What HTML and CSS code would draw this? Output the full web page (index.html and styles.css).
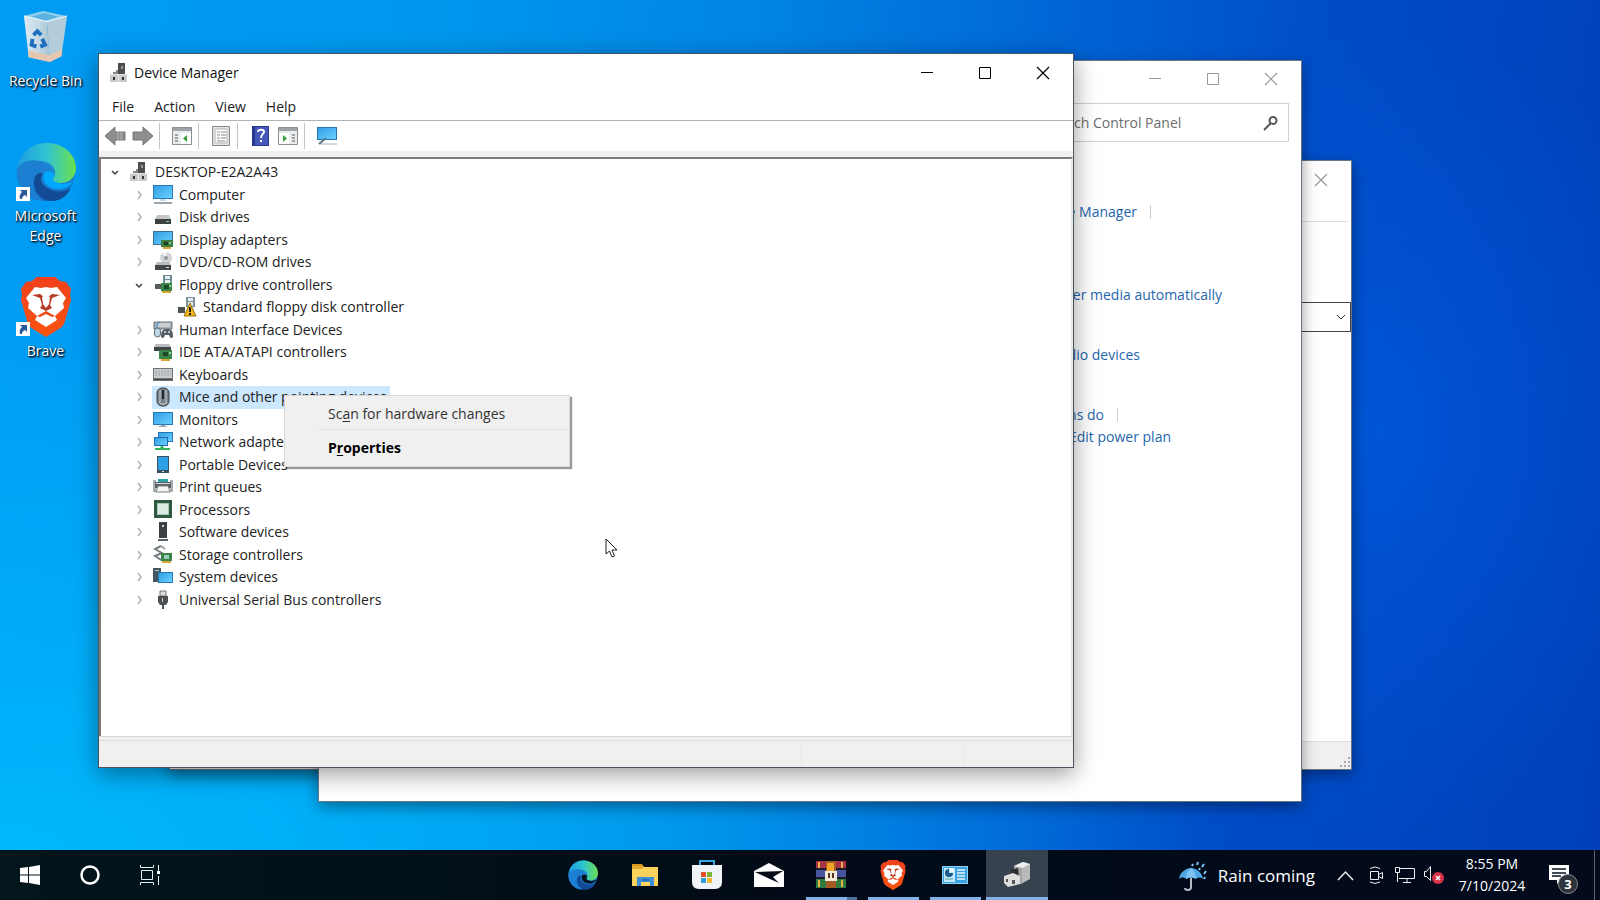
FILE: index.html
```html
<!DOCTYPE html>
<html lang="en">
<head>
<meta charset="utf-8">
<title>Device Manager</title>
<link rel="stylesheet" href="styles.css">
</head>
<body>
<svg class="defs" aria-hidden="true">
  <defs>
    <linearGradient id="scr" x1="0" y1="0" x2="1" y2="1"><stop offset="0" stop-color="#2f9fe6"/><stop offset="1" stop-color="#6fd0ff"/></linearGradient>
    <linearGradient id="edgeA" x1="0" y1="0" x2="1" y2="0"><stop offset="0" stop-color="#1b9de0"/><stop offset=".5" stop-color="#30c4d0"/><stop offset="1" stop-color="#6be04e"/></linearGradient>
    <linearGradient id="edgeB" x1="0" y1="0" x2="0" y2="1"><stop offset="0" stop-color="#2a9fe8"/><stop offset="1" stop-color="#1368c4"/></linearGradient>
    <linearGradient id="brv" x1="0" y1="0" x2="0" y2="1"><stop offset="0" stop-color="#f0401c"/><stop offset="1" stop-color="#fb5410"/></linearGradient>
    <linearGradient id="binG" x1="0" y1="0" x2="1" y2="0"><stop offset="0" stop-color="#dceaf3"/><stop offset=".6" stop-color="#c3d8e4"/><stop offset="1" stop-color="#a9c3d1"/></linearGradient>
    <symbol id="i-dm" viewBox="0 0 20 20"><path d="M9 0h7v11H9z" fill="#4d4d4d"/><path d="M12 3h2v3h-2z" fill="#999"/><path d="M7 7h2v4H7zM4 9h5v2H4z" fill="#888"/><path d="M1 11h17v8H1z" fill="#c9c9c9"/><path d="M1 11h17v1H1z" fill="#e6e6e6"/><path d="M4 14h2v3H4zM13 14h2v3h-2z" fill="#333"/><path d="M9 12h1v7H9z" fill="#eee"/></symbol>
    <symbol id="i-computer" viewBox="0 0 20 20"><path d="M0 0h20v14H0z" fill="#2478b8"/><path d="M1 1h18v12H1z" fill="url(#scr)"/><path d="M7 14h6v2H7z" fill="#c8dce8"/><path d="M1 17h18v2H1z" fill="#9aa7b0"/></symbol>
    <symbol id="i-disk" viewBox="0 0 20 20"><path d="M4 8h12l2 4H2z" fill="#c4c6c8"/><path d="M2 12h16v5H2z" fill="#3c4144"/><path d="M13 14h3v1h-3z" fill="#7fd68a"/></symbol>
    <symbol id="i-display" viewBox="0 0 20 20"><path d="M0 1h20v14H0z" fill="#3b6f94"/><path d="M1 2h18v12H1z" fill="url(#scr)"/><path d="M8 10h12v7H8z" fill="#3b7d45"/><path d="M11 12h4v3h-4z" fill="#1d3c22"/><path d="M16 12h2v2h-2z" fill="#8bc48f"/><path d="M10 17h8v2h-8z" fill="#d9a82e"/></symbol>
    <symbol id="i-dvd" viewBox="0 0 20 20"><circle cx="13" cy="6" r="6" fill="#d2d5d7"/><path d="M13 6 9 1a6 6 0 0 1 5-1z" fill="#f5f5f5"/><circle cx="13" cy="6" r="2" fill="#8f9599"/><path d="M4 10h12l2 3H2z" fill="#b9bcbe"/><path d="M2 13h16v5H2z" fill="#44484b"/><path d="M13 15h3v1h-3z" fill="#ddd"/></symbol>
    <symbol id="i-floppy" viewBox="0 0 20 20"><path d="M10 0h9v8h-9z" fill="#6c8f92"/><path d="M12 1h5v3h-5zM12 5h5v3h-5z" fill="#e4eef0"/><path d="M2 9h7v5H2z" fill="#555c5e"/><path d="M8 8h11v8H8z" fill="#3b8549"/><path d="M11 10h5v4h-5z" fill="#1f4a2a"/><path d="M16 10h2v2h-2z" fill="#9bd0a2"/><path d="M9 16h9v2H9z" fill="#d9a82e"/></symbol>
    <symbol id="i-floppywarn" viewBox="0 0 20 20"><path d="M9 0h9v10H9z" fill="#7d9196"/><path d="M11 1h5v3h-5zM11 5h5v4h-5z" fill="#e4eef0"/><path d="M1 10h7v6H1z" fill="#4b5153"/><path d="m13 6 6 13H7z" fill="#f4b61d" stroke="#9a7310" stroke-width="1"/><path d="M12 10h2v5h-2zM12 16h2v2h-2z" fill="#222"/></symbol>
    <symbol id="i-hid" viewBox="0 0 20 20"><path d="M1 2h18v7H1z" fill="#a9b0b5" stroke="#6c7479"/><path d="M3 4h14M3 6h14" stroke="#e8ecee"/><rect x="1.500" y="8" width="6" height="9" rx="3" fill="#bfd8e8" stroke="#5f6c75"/><path d="M4 8V4l3-2" stroke="#2d80c8" fill="none"/><path d="M8 17c0-7 2-8 6-8s6 1 6 8c-2 2-3 1-4-2h-4c-1 3-2 4-4 2z" fill="#555f66"/><circle cx="12" cy="12" r="1" fill="#ddd"/><circle cx="16" cy="12" r="1" fill="#ddd"/></symbol>
    <symbol id="i-ide" viewBox="0 0 20 20"><path d="M3 2h13l2 3H1z" fill="#b8bcbe"/><path d="M1 5h17v4H1z" fill="#3f4446"/><path d="M6 8h13v9H6z" fill="#3b8549"/><path d="M10 10h5v4h-5z" fill="#1f4a2a"/><path d="M16 10h2v2h-2z" fill="#9bd0a2"/><path d="M8 17h9v2H8z" fill="#d9a82e"/></symbol>
    <symbol id="i-kbd" viewBox="0 0 20 20"><path d="M0 3h20v13H0z" fill="#6e7376"/><path d="M1 4h18v9H1z" fill="#c9cdd0"/><path d="M2 6h16M2 8h16M2 10h16" stroke="#9ba1a5" stroke-dasharray="2 1"/><path d="M1 14h18v1H1z" fill="#44484b"/></symbol>
    <symbol id="i-mouse" viewBox="0 0 20 20"><rect x="4" y="1" width="12" height="18" rx="5" fill="#7a8289" stroke="#3a3f42"/><path d="M7 3v12M13 3v12" stroke="#c3cdd3"/><path d="M9 3h2v9H9z" fill="#20262a"/><path d="M6 15c2 3 6 3 8 0" stroke="#d5dde2" fill="none"/></symbol>
    <symbol id="i-monitor" viewBox="0 0 20 20"><path d="M0 2h20v13H0z" fill="#2478b8"/><path d="M1 3h18v11H1z" fill="url(#scr)"/><path d="M8 15h4v1H8zM6 16h8v1H6z" fill="#9aa7b0"/></symbol>
    <symbol id="i-net" viewBox="0 0 20 20"><path d="M5 0h15v10H5z" fill="#2478b8"/><path d="M6 1h13v8H6z" fill="url(#scr)"/><path d="M1 5h14v9H1z" fill="#1d6cab"/><path d="M2 6h12v7H2z" fill="url(#scr)"/><path d="M2 16h5l1-2h2l1 2h6v2H2z" fill="#35b558"/></symbol>
    <symbol id="i-portable" viewBox="0 0 20 20"><path d="M4 1h12v17H4z" fill="#3c4f5c"/><path d="M5 2h10v13H5z" fill="#2f9fe6"/><path d="M9 16h2v1H9z" fill="#dde"/></symbol>
    <symbol id="i-print" viewBox="0 0 20 20"><path d="M0 3h3v12H0zM17 3h3v12h-3z" fill="#a9b0b4"/><path d="M5 2h10v4H5z" fill="#2fa3a8"/><path d="M2 5h16v6H2z" fill="#5a6064"/><path d="M3 6h14v1H3z" fill="#d9dee0"/><path d="M5 9h10l2 6H3z" fill="#f3f5f6" stroke="#7a8084"/></symbol>
    <symbol id="i-cpu" viewBox="0 0 20 20"><path d="M1 0h18v18H1z" fill="#2f5a41"/><path d="M4 3h12v12H4z" fill="#a9c8b3"/><path d="M5 4h10v10H5z" fill="#dcebe0"/></symbol>
    <symbol id="i-soft" viewBox="0 0 20 20"><path d="M6 0h8v16H6z" fill="#3a4043"/><path d="M9 3h2v2H9z" fill="#c9d6ce"/><path d="M5 17h10v2H5z" fill="#5d6467"/></symbol>
    <symbol id="i-storage" viewBox="0 0 20 20"><path d="M8 1 2 4l7 4-7 3 6 4" stroke="#747b7f" stroke-width="2" fill="none"/><path d="m8 1 4 3" stroke="#9ba2a6" stroke-width="2"/><path d="M8 8h11v8H8z" fill="#3b8549"/><path d="M11 10h5v4h-5z" fill="#9bd0b8"/><path d="M9 16h9v2H9z" fill="#d9a82e"/></symbol>
    <symbol id="i-system" viewBox="0 0 20 20"><path d="M0 1h8v14H0z" fill="#44565e"/><path d="M2 3h4v1H2z" fill="#b5c6cc"/><path d="M5 5h15v11H5z" fill="#2478b8"/><path d="M6 6h13v9H6z" fill="url(#scr)"/></symbol>
    <symbol id="i-usb" viewBox="0 0 20 20"><path d="M7 1h6v5H7z" fill="#ddd" stroke="#777"/><path d="M5 6h10v6l-2 3H7l-2-3z" fill="#4c5053"/><path d="M9 8h1v4H9z" fill="#ccc"/><path d="M9 15h2v4H9z" fill="#4c5053"/></symbol>
    <symbol id="i-right" viewBox="0 0 20 20"><path d="m9 6 3 4-3 4" fill="none" stroke="#b4b4b4" stroke-width="1.500"/></symbol>
    <symbol id="i-down" viewBox="0 0 20 20"><path d="m7 9 3 3 3-3" fill="none" stroke="#404040" stroke-width="1.500"/></symbol>
    <symbol id="i-x" viewBox="0 0 14 14"><path d="m1 1 12 12M13 1 1 13" fill="none" stroke="currentColor" stroke-width="1.200"/></symbol>
    <symbol id="i-max" viewBox="0 0 14 14"><path d="M1.500 1.500h11v11h-11z" fill="none" stroke="currentColor"/></symbol>
    <symbol id="i-min" viewBox="0 0 14 14"><path d="M1 6.500h12" stroke="currentColor"/></symbol>
    <symbol id="i-edge" viewBox="0 0 60 60">
      <circle cx="30" cy="30" r="29" fill="url(#edgeB)"/>
      <path d="M1 28C3 11 16 1 31 1c17 0 29 12 29 25 0 9-7 15-15 15-6 0-9-2-8-4 5-6 1-17-11-18C15 18 4 22 1 28z" fill="url(#edgeA)"/>
      <path d="M1 27c5-9 18-11 27-6 7 3 9 8 7 11-9-5-18 1-18 9 0 8 5 15 12 18C13 60-1 45 1 27z" fill="#1c7fd2"/>
      <path d="M20 33c-6 11 2 24 14 26 10 1 17-5 21-13-9 6-23 4-29-5-2-3-1-6 1-9-3-2-5-1-7 1z" fill="#124a96"/>
      <path d="M28 31c-3 8 4 17 16 16 6 0 11-4 13-8-5 3-12 4-17 1-3-1-4-2-2-5 2-5-7-8-10-4z" fill="currentColor"/>
    </symbol>
    <symbol id="i-brave" viewBox="0 0 52 60">
      <path d="M12 4 17 0h18l5 4 6 1 5 7-1 5 1 6-6 21c-1 4-3 6-6 8L26 60 13 52c-3-2-5-4-6-8L1 23l1-6-1-5 5-7z" fill="url(#brv)"/>
      <path d="m15 10 6 1 5-1 5 1 6-1 9 11-3 5 1 5-9 8 2 4-11 7-11-7 2-4-9-8 1-5-3-5z" fill="#fff"/>
      <path d="m12 18 8-1 4 3-1 7 3 4 3-4-1-7 4-3 8 1-8 3-2 7 2 3-6 3-6-3 2-3-2-7z" fill="#b83a24"/>
      <path d="m22 20 4-2 4 2-1 7-3 3-3-3z" fill="#fff"/>
      <path d="m17 39 9-5 9 5-3 1-6-3-6 3z" fill="#ee4a1c"/>
    </symbol>
    <symbol id="i-link" viewBox="0 0 14 14"><path d="M0 0h14v14H0z" fill="#fff"/><path d="M4 3h7v7L9 8c-2 1-3 2-3 4H4c-1-3 0-5 2-7z" fill="#2a5a9c"/></symbol>
  </defs>
</svg>

<main class="desktop">
  <nav class="shortcuts" aria-label="Desktop">
    <a class="shortcut" href="#bin">
      <span class="pic"><svg width="48" height="54" viewBox="0 0 50 56"><path d="M2 6 22 1l24 5-2 7H4z" fill="#8fcdea"/><path d="m10 7 13-4 15 4-14 4z" fill="#5cb2de"/><path d="M2 6l24 6 3 42-22-5z" fill="url(#binG)"/><path d="m26 12 21-6-6 42-12 6z" fill="#b2ccda"/><path d="m6 42 22 5 14-6-1 7-12 6-22-5z" fill="#e6c6ae"/><path d="m2 6 24 6 21-6" stroke="#f3fafd" fill="none"/><g fill="none" stroke="#1f6fc0" stroke-width="4"><path d="m12 26 4-4 4 4"/><path d="m21 30 3 6-5 2"/><path d="m15 38-5-2 1-6"/></g></svg></span>
      <span>Recycle Bin</span>
    </a>
    <a class="shortcut" href="#edge">
      <span class="pic cut-edge"><svg width="60" height="60"><use href="#i-edge"/></svg><svg class="mark" width="14" height="14"><use href="#i-link"/></svg></span>
      <span>Microsoft Edge</span>
    </a>
    <a class="shortcut" href="#brave">
      <span class="pic"><svg width="52" height="60"><use href="#i-brave"/></svg><svg class="mark" width="14" height="14"><use href="#i-link"/></svg></span>
      <span>Brave</span>
    </a>
  </nav>

  <section class="window win-back" aria-label="Properties">
    <div class="titlebar"><div class="controls"><button aria-label="Close"><svg width="14" height="14"><use href="#i-x"/></svg></button></div></div>
    <hr>
    <div class="combo"><select aria-label="Location"><option></option></select><svg width="10" height="6" viewBox="0 0 10 6"><path d="m1 1 4 4 4-4" fill="none" stroke="#333"/></svg></div>
    <div class="grow"></div>
    <footer class="grip-bar"><svg width="12" height="12" viewBox="0 0 12 12"><path d="M9 0h2v2H9zM9 4h2v2H9zM5 4h2v2H5zM9 8h2v2H9zM5 8h2v2H5zM1 8h2v2H1z" fill="#aaa"/></svg></footer>
  </section>

  <section class="window win-mid" aria-label="Control Panel">
    <div class="titlebar short"><div class="controls">
      <button aria-label="Minimize"><svg width="14" height="14"><use href="#i-min"/></svg></button>
      <button aria-label="Maximize"><svg width="14" height="14"><use href="#i-max"/></svg></button>
      <button aria-label="Close"><svg width="14" height="14"><use href="#i-x"/></svg></button></div></div>
    <div class="search"><input type="text" aria-label="Search Control Panel" placeholder="Search Control Panel"><svg width="16" height="16" viewBox="0 0 16 16"><circle cx="10" cy="5.500" r="3.500" fill="none" stroke="#555" stroke-width="2"/><path d="M7.500 8.500 1 15" stroke="#555" stroke-width="2"/></svg></div>
    <div class="tasks">
      <p class="t-dev"><a href="#dm">Device Manager</a><i></i></p>
      <p class="t-media"><a href="#media">Play CDs or other media automatically</a></p>
      <p class="t-audio"><a href="#audio">Manage audio devices</a></p>
      <p class="t-power"><a href="#power">Change what the power buttons do</a><i></i></p>
      <p class="t-plan"><a href="#plan">Edit power plan</a></p>
    </div>
  </section>

  <section class="window win-front" aria-label="Device Manager">
    <header class="titlebar">
      <svg width="20" height="20"><use href="#i-dm"/></svg>
      <h1>Device Manager</h1>
      <div class="controls">
        <button aria-label="Minimize"><svg width="14" height="14"><use href="#i-min"/></svg></button>
        <button aria-label="Maximize"><svg width="14" height="14"><use href="#i-max"/></svg></button>
        <button aria-label="Close"><svg width="14" height="14"><use href="#i-x"/></svg></button>
      </div>
    </header>
    <nav class="menubar"><button>File</button><button>Action</button><button>View</button><button>Help</button></nav>
    <div class="toolbar">
      <button aria-label="Back"><svg width="22" height="20" viewBox="0 0 22 20"><path d="M1 10 11 1v5h10v8H11v5z" fill="#8e8e8e" stroke="#777"/><path d="M14 6v8M17 6v8" stroke="#b5b5b5"/></svg></button>
      <button aria-label="Forward"><svg width="22" height="20" viewBox="0 0 22 20"><path d="M21 10 11 1v5H1v8h10v5z" fill="#8e8e8e" stroke="#777"/></svg></button>
      <span class="sep"></span>
      <button aria-label="Show console tree"><svg width="20" height="18" viewBox="0 0 20 18"><path d="M.5.500h19v17H.5z" fill="#e9ebec" stroke="#8a8f92"/><path d="M1 1h18v3H1z" fill="#9da3a6"/><path d="M9 6h10v11H9z" fill="#fff"/><path d="M3 8h3M3 11h3M3 14h3" stroke="#555"/><path d="M15 8v7l-4-3.500z" fill="#35a035"/></svg></button>
      <span class="sep"></span>
      <button aria-label="Properties"><svg width="18" height="20" viewBox="0 0 18 20"><path d="M.5.500h17v19H.5z" fill="#e4e4e4" stroke="#85898b"/><path d="M3 3h12v14H3z" fill="#fff" stroke="#b5b5b5"/><path d="M5 6h3M9 6h5M5 9h3M9 9h5M5 12h3M9 12h5M5 15h8" stroke="#888"/></svg></button>
      <span class="sep"></span>
      <button aria-label="Help"><svg width="17" height="20" viewBox="0 0 17 20"><path d="M0 0h17v20H0z" fill="#27368f"/><path d="M3 1h13v18H3z" fill="#4458b8"/><path d="M6 6c0-3 6-3 6 0 0 2-3 2-3 6" fill="none" stroke="#fff" stroke-width="2"/><path d="M8 14h2v2H8z" fill="#fff"/></svg></button>
      <button aria-label="Show action pane"><svg width="20" height="18" viewBox="0 0 20 18"><path d="M.5.500h19v17H.5z" fill="#e9ebec" stroke="#8a8f92"/><path d="M1 1h18v3H1z" fill="#9da3a6"/><path d="M1 6h10v11H1z" fill="#fff"/><path d="M14 8h3M14 11h3M14 14h3" stroke="#555"/><path d="M5 8v7l4-3.500z" fill="#35a035"/></svg></button>
      <span class="sep"></span>
      <button aria-label="Scan for hardware changes"><svg width="20" height="20" viewBox="0 0 20 20"><path d="M0 1h20v13H0z" fill="#2478b8"/><path d="M1 2h18v11H1z" fill="url(#scr)"/><path d="m2 18 7-6" stroke="#5c7a8a" stroke-width="2"/><path d="M4 18h16" stroke="#a5b2b9"/></svg></button>
    </div>
    <div class="pane">
      <ul class="tree">
        <li class="l0"><svg><use href="#i-down"/></svg><span><svg><use href="#i-dm"/></svg>DESKTOP-E2A2A43</span></li>
        <li><svg><use href="#i-right"/></svg><span><svg><use href="#i-computer"/></svg>Computer</span></li>
        <li><svg><use href="#i-right"/></svg><span><svg><use href="#i-disk"/></svg>Disk drives</span></li>
        <li><svg><use href="#i-right"/></svg><span><svg><use href="#i-display"/></svg>Display adapters</span></li>
        <li><svg><use href="#i-right"/></svg><span><svg><use href="#i-dvd"/></svg>DVD/CD-ROM drives</span></li>
        <li><svg><use href="#i-down"/></svg><span><svg><use href="#i-floppy"/></svg>Floppy drive controllers</span></li>
        <li class="l2"><svg></svg><span><svg><use href="#i-floppywarn"/></svg>Standard floppy disk controller</span></li>
        <li><svg><use href="#i-right"/></svg><span><svg><use href="#i-hid"/></svg>Human Interface Devices</span></li>
        <li><svg><use href="#i-right"/></svg><span><svg><use href="#i-ide"/></svg>IDE ATA/ATAPI controllers</span></li>
        <li><svg><use href="#i-right"/></svg><span><svg><use href="#i-kbd"/></svg>Keyboards</span></li>
        <li class="selected"><svg><use href="#i-right"/></svg><span><svg><use href="#i-mouse"/></svg>Mice and other pointing devices</span></li>
        <li><svg><use href="#i-right"/></svg><span><svg><use href="#i-monitor"/></svg>Monitors</span></li>
        <li><svg><use href="#i-right"/></svg><span><svg><use href="#i-net"/></svg>Network adapters</span></li>
        <li><svg><use href="#i-right"/></svg><span><svg><use href="#i-portable"/></svg>Portable Devices</span></li>
        <li><svg><use href="#i-right"/></svg><span><svg><use href="#i-print"/></svg>Print queues</span></li>
        <li><svg><use href="#i-right"/></svg><span><svg><use href="#i-cpu"/></svg>Processors</span></li>
        <li><svg><use href="#i-right"/></svg><span><svg><use href="#i-soft"/></svg>Software devices</span></li>
        <li><svg><use href="#i-right"/></svg><span><svg><use href="#i-storage"/></svg>Storage controllers</span></li>
        <li><svg><use href="#i-right"/></svg><span><svg><use href="#i-system"/></svg>System devices</span></li>
        <li><svg><use href="#i-right"/></svg><span><svg><use href="#i-usb"/></svg>Universal Serial Bus controllers</span></li>
      </ul>
    </div>
    <footer class="statusbar"><span></span><span></span><span></span></footer>
  </section>

  <div class="context" role="menu">
    <button role="menuitem">Sc<u>a</u>n for hardware changes</button>
    <hr>
    <button role="menuitem" class="strong">P<u>r</u>operties</button>
  </div>

  <svg class="cursor" width="13" height="20" viewBox="0 0 13 20"><path d="M1 1v15l3.500-3 2.500 6 2.500-1-2.500-6H12z" fill="#fff" stroke="#222"/></svg>
</main>

<footer class="taskbar">
  <div class="start">
    <button aria-label="Start"><svg width="20" height="20" viewBox="0 0 20 20"><path d="m0 3 8-1v7.500H0zM9 2l11-2v9.500H9zM0 10.500h8V18l-8-1zM9 10.500h11V20L9 18z" fill="#fff"/></svg></button>
    <button aria-label="Cortana"><svg width="20" height="20" viewBox="0 0 20 20"><circle cx="10" cy="10" r="8.500" fill="none" stroke="#fff" stroke-width="2.500"/></svg></button>
    <button aria-label="Task View"><svg width="22" height="20" viewBox="0 0 22 20"><path d="M2.500 5.500h11v9h-11zM1.500 0v2.500h13V0M1.500 20v-2.500h13V20M19.500 0v6M19.500 11v9" fill="none" stroke="#e6eeee"/><path d="M18 6h3v3h-3z" fill="#fff"/></svg></button>
  </div>
  <div class="apps">
    <button aria-label="Microsoft Edge"><svg width="30" height="30"><use href="#i-edge"/></svg></button>
    <button aria-label="File Explorer"><svg width="28" height="24" viewBox="0 0 28 24"><path d="M1 1h10l2 3H1z" fill="#d99a1c"/><path d="M1 4h26v19H1z" fill="#fbd35a"/><path d="M1 3h12l-2 3H1z" fill="#e8ac30"/><path d="M6 14h17v9h-4v-4h-9v4H6z" fill="#3f8fd8"/><path d="M11 16h7v2h-7z" fill="#2a6fb4"/></svg></button>
    <button aria-label="Microsoft Store"><svg width="30" height="30" viewBox="0 0 30 30"><path d="M8 6V1h14v5" fill="none" stroke="#34a6dc" stroke-width="2"/><path d="M0 5h30v17q0 7-7 7H7q-7 0-7-7z" fill="#f1f4f7"/><path d="M9 12h5v5H9z" fill="#e0502c"/><path d="M15 12h5v5h-5z" fill="#7db53a"/><path d="M9 18h5v5H9z" fill="#2f9ade"/><path d="M15 18h5v5h-5z" fill="#f4b932"/></svg></button>
    <button aria-label="Mail"><svg width="30" height="24" viewBox="0 0 30 24"><path d="M0 8 15 0l15 8v16H0z" fill="#fff"/><path d="m1 9 28-1-10 6 6 6-9-4z" fill="#020d17"/></svg></button>
    <button class="run stacked" aria-label="WinRAR"><svg width="30" height="28" viewBox="0 0 30 28"><path d="M0 0h30v9H0z" fill="#a83246"/><path d="M0 9h30v9H0z" fill="#48549e"/><path d="M0 18h30v9H0z" fill="#2e7d3e"/><path d="M3 1v7M26 1v7M3 19v7M26 19v7" stroke="#e8b048" stroke-width="2"/><path d="M0 8h30M0 17h30" stroke="#1b1b2b" stroke-width="2"/><path d="M10 0h10v27H10z" fill="#a55c24"/><path d="M11 2h7v8h-7z" fill="#f0a62c"/><path d="M9 10h12v10H9z" fill="#f3ecdc"/><path d="M12 12h2v5h-2zM16 12h2v5h-2z" fill="#5a3420"/></svg></button>
    <button class="run" aria-label="Brave"><svg width="26" height="30"><use href="#i-brave"/></svg></button>
    <button class="run" aria-label="Control Panel"><svg width="26" height="20" viewBox="0 0 26 20"><path d="M0 1h26v18H0z" fill="#8ed3f7"/><path d="M1 2h24v16H1z" fill="#3aa2e0"/><path d="M2 3h11v14H2z" fill="#bfe8fb"/><path d="M7 4a4 4 0 1 0 4 4H7z" fill="#1c5a8c"/><path d="M8 3a4 4 0 0 1 4 4H8z" fill="#f2f7fa"/><path d="M15 5h8M15 8h8M15 11h8M15 14h8" stroke="#e6f6fd" stroke-width="1.500"/><path d="M3 14h8" stroke="#5a9"/></svg></button>
    <button class="run active" aria-label="Device Manager"><svg width="28" height="26" viewBox="0 0 28 26"><path d="m11 4 9-4 7 2v15l-9 5-7-2z" fill="#b9babb"/><path d="m11 4 8 2v16l-8-2z" fill="#a3a4a5"/><path d="m11 4 9-4 7 2-8 4z" fill="#efefef"/><path d="m8 8 7-2 1 9-7 1z" fill="#2b2d2e"/><path d="m1 14 9-3 7 3v8L5 25l-4-4z" fill="#dedede"/><path d="M3 17h2v3H3zM9 18h3v4H9z" fill="#555"/></svg></button>
  </div>
  <div class="tray">
    <button class="weather"><svg width="30" height="30" viewBox="0 0 30 30"><path d="M1 18c1-7 7-11 12-11s11 4 12 11c-2-2-5-2-7 0-3-2-7-2-10 0-2-2-5-2-7 0z" fill="#4fa5e4"/><path d="M8 18c0-5 2-9 5-11 3 2 5 6 5 11-3-2-7-2-10 0z" fill="#7cc2f2"/><path d="M13 17v9q0 3-3 3t-3-2" fill="none" stroke="#b7bfc6" stroke-width="2"/><path d="m15 3-1 2M20 1l-1 3M26 3l-2 3M22 7l-1 2M28 10l-2 3M27 16l-1 2" stroke="#7fc4f4" stroke-width="2"/></svg><span>Rain coming</span></button>
    <button class="ic chev" aria-label="Show hidden icons"><svg width="17" height="11" viewBox="0 0 17 11"><path d="m1 10 7.500-8L16 10" fill="none" stroke="#eee" stroke-width="1.500"/></svg></button>
    <button class="ic" aria-label="Meet Now"><svg width="16" height="18" viewBox="0 0 16 18"><path d="M2.500 5.500h8v8h-8zM10.500 8.500l4-2v6l-4-2M2 2.500q5-3 10 0M2 16q5 3 10 0" fill="none" stroke="#eee"/></svg></button>
    <button class="ic" aria-label="Network"><svg width="20" height="18" viewBox="0 0 20 18"><path d="M4.500 2.500h15v10H4M12 13v3M8 16.500h8M.5 1.500h4v5h-4zM2.500 7v9" fill="none" stroke="#eee"/></svg></button>
    <button class="ic" aria-label="Volume muted"><svg width="22" height="20" viewBox="0 0 22 20"><path d="M1.500 6.500h2l4-5v14l-4-4h-2z" fill="none" stroke="#eee"/><circle cx="15" cy="13" r="6" fill="#d8324a"/><path d="m13 11 4 4M17 11l-4 4" stroke="#fff" stroke-width="1.500"/></svg></button>
    <button class="clock"><time>8:55 PM</time><time>7/10/2024</time></button>
    <button class="notes" aria-label="3 new notifications"><svg width="20" height="20" viewBox="0 0 20 20"><path d="M0 0h20v15h-8l-4 4v-4H0z" fill="#fff"/><path d="M3 4h14M3 8h14M3 11h9" stroke="#06121e" stroke-width="1.500"/></svg><b>3</b></button>
    <button class="peek" aria-label="Show desktop"></button>
  </div>
</footer>
</body>
</html>
```
FILE: styles.css
```css
* { box-sizing: border-box; }
html, body { height: 100%; margin: 0; }
body {
  display: flex;
  flex-direction: column;
  overflow: hidden;
  font: 14px/20px "Open Sans", "Noto Sans", sans-serif;
  color: #222;
  background:
    radial-gradient(ellipse 75% 60% at 0% 95%, rgba(0, 190, 255, .8), rgba(0, 190, 255, 0)),
    radial-gradient(ellipse 22% 45% at 86% 48%, rgba(0, 96, 232, .5), rgba(0, 96, 232, 0)),
    linear-gradient(97deg, #009cf4 0%, #0098ee 25%, #0084e2 45%, #0062d4 64%, #004cc8 78%, #003fb8 100%);
}
button, input, select { font: inherit; color: inherit; border: 0; padding: 0; margin: 0; background: none; }
a { color: inherit; text-decoration: none; }
p, ul, h1 { margin: 0; padding: 0; font-weight: 400; font-size: inherit; }
.defs { position: absolute; width: 0; height: 0; }

.desktop { flex: 1; position: relative; min-height: 0; }

/* desktop shortcuts */
.shortcuts { display: grid; grid-auto-rows: 135px; width: 91px; padding-top: 5px; }
.shortcut {
  display: flex; flex-direction: column; align-items: center; gap: 2px;
  color: #fff; text-align: center; line-height: 20px; padding: 0 4px;
  text-shadow: 1px 1px 2px #000, 1px 1px 2px #013;
}
.shortcut > span:last-child { margin: 0 -4px; }
.pic { position: relative; display: grid; place-items: center; width: 60px; height: 64px; }
.cut-edge svg { color: #00a8ff; }
.mark { position: absolute; left: 0; bottom: 3px; }

/* windows */
.window { position: absolute; display: flex; flex-direction: column; background: #fff; border: 1px solid rgba(40, 60, 80, .7); box-shadow: 0 5px 14px rgba(0, 0, 0, .4); }
.win-back { left: 169px; top: 160px; right: 248px; bottom: 80px; color: #999; }
.win-mid { left: 318px; top: 60px; right: 298px; bottom: 48px; color: #999; }
.win-front { left: 98px; top: 53px; right: 526px; bottom: 82px; color: #000; border-color: #4a5560; box-shadow: 0 6px 22px rgba(0, 0, 0, .4); }
.titlebar { display: flex; align-items: center; gap: 5px; height: 38px; padding-left: 10px; }
.titlebar h1 { color: #111; }
.titlebar.short { height: 36px; }
.controls { display: flex; margin-left: auto; align-self: stretch; padding-right: 1px; }
.controls button { width: 58px; display: grid; place-items: center; }

.menubar { display: flex; gap: 20px; padding: 2px 13px 0; height: 28px; align-items: center; }
.menubar button { color: #222; }
.toolbar { display: flex; align-items: stretch; height: 31px; padding: 0 2px; border-top: 1px solid #b4b4b4; }
.toolbar button { width: 28px; display: grid; place-items: center; }
.sep { width: 1px; margin: 2px 8px 2px 2px; background: #c4c4c4; }
.pane { flex: 1; min-height: 0; border-top: 6px solid #f0f0f0; display: flex; }
.tree {
  flex: 1; list-style: none; padding: 2px 0 125px;
  border: 2px solid #7c7c7c; border-right-color: #e8e8e8; border-bottom: 0;
  display: grid; grid-template-rows: repeat(20, minmax(0, 1fr));
}
.tree li { display: flex; align-items: stretch; padding-left: 28px; }
.tree li.l0 { padding-left: 4px; }
.tree li.l2 { padding-left: 52px; }
.tree svg { width: 20px; height: 20px; flex: none; align-self: center; }
.tree span { display: flex; align-items: center; gap: 6px; margin-left: 3px; padding: 0 3px 0 1px; color: #222; white-space: nowrap; }
.tree .selected span { background: #cce8ff; }
.statusbar { display: flex; height: 31px; background: #f0f0f0; border-top: 1px solid #d6d6d6; }
.statusbar span { flex: 10; border-right: 1px solid #e6e6e6; margin-top: 3px; border-top: 1px solid #dcdcdc; }
.statusbar span:first-child { flex: 65; }
.statusbar span:nth-child(2) { flex: 15; }
.statusbar span:last-child { border-right: 0; }

/* Control Panel */
.search { display: flex; align-items: center; align-self: flex-end; width: 256px; height: 39px; margin: 6px 12px 0 0; padding: 0 9px 0 11px; border: 1px solid #d0d0d0; }
.search input { flex: 1; min-width: 0; outline: 0; }
.search input::placeholder { color: #6d6d6d; opacity: 1; }
.tasks { display: flex; flex-direction: column; align-items: flex-end; padding-top: 59px; color: #1f66ad; white-space: nowrap; }
.tasks p { display: flex; align-items: center; line-height: 22px; }
.tasks i { width: 1px; height: 14px; margin-left: 13px; background: #d0d0d0; }
.t-dev { margin-right: 150px; }
.t-media { margin: 61px 79px 0 0; }
.t-audio { margin: 38px 161px 0 0; }
.t-power { margin: 38px 183px 0 0; }
.t-plan { margin-right: 130px; }

/* Properties */
.win-back hr { width: 100%; margin: 22px 0 0; border: 0; border-top: 1px solid #ddd; border-right: 6px solid #fff; }
.combo { position: relative; display: flex; margin-top: 80px; }
.combo select { appearance: none; flex: 1; height: 30px; border: 1px solid #444; background: #fff; }
.combo svg { position: absolute; right: 5px; top: 12px; }
.grow { flex: 1; }
.grip-bar { height: 28px; background: #f0f0f0; border-top: 1px solid #ddd; display: flex; justify-content: flex-end; align-items: flex-end; }

/* context menu */
.context { position: absolute; left: 284px; top: 395px; width: 286px; padding: 0 1px; display: flex; flex-direction: column; background: #f0f0f0; border: 1px solid #d8d8d8; box-shadow: 2px 2px 1px rgba(0, 0, 0, .4); }
.context button { height: 36px; padding-left: 42px; text-align: left; color: #333; }
.context button:first-child { height: 33px; padding-top: 2px; }
.context button.strong { font-weight: 700; color: #000; }
.context hr { width: 250px; margin: 0 0 0 auto; border: 0; border-top: 1px solid #e0e0e0; }
.context u { text-underline-offset: 2px; }
.cursor { position: absolute; left: 605px; top: 538px; }

/* taskbar */
.taskbar { flex: none; height: 50px; display: grid; grid-template-columns: 1fr auto 1fr; background: linear-gradient(90deg, #02161c, #020b17 50%, #020a1c); color: #fff; }
.taskbar button { display: grid; place-items: center; }
.start { display: flex; }
.start button { width: 60px; }
.apps { display: flex; }
.apps button { width: 62px; color: #031420; position: relative; }
.apps .run::after { content: ""; position: absolute; left: 6px; right: 5px; bottom: 0; height: 3px; background: #7fb2e8; }
.apps .stacked::after { border-right: 10px solid #50719c; }
.apps .active { background: #36424e; }
.apps .active::after { left: 0; right: 0; }
.tray { display: flex; justify-content: flex-end; }
.taskbar .weather { display: flex; align-items: center; gap: 10px; padding-top: 2px; font-size: 17px; margin-right: 14px; }
.ic { width: 29px; }
.ic.chev { width: 32px; }
.taskbar .clock { width: 88px; align-content: center; line-height: 22px; }
.notes { width: 58px; position: relative; padding-right: 12px; }
.notes b { position: absolute; left: 22px; top: 24px; width: 20px; height: 20px; border: 1px solid #888; border-radius: 50%; background: #2c333a; font-size: 13px; line-height: 18px; }
.peek { width: 6px; border-left: 1px solid #59626e; }
```
